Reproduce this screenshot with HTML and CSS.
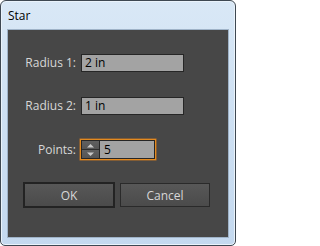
FILE: index.html
```html
<!DOCTYPE html>
<html>
<head>
<meta charset="utf-8">
<link rel="stylesheet" href="styles.css">
</head>
<body>
<div class="window">
  <div class="titlebar">Star</div>
  <div class="client">
    <div class="form">
      <label class="lbl">Radius 1:</label>
      <div class="field">2 in</div>
      <label class="lbl">Radius 2:</label>
      <div class="field">1 in</div>
      <label class="lbl lbl-points">Points:</label>
      <div class="spin-wrap">
        <div class="spin">
          <div class="spin-btns">
            <div class="spin-btn"><svg width="9" height="5" viewBox="0 0 9 5"><path d="M1 4.5 L4.5 1 L8 4.5 Z" fill="#c9c9c9"/></svg></div>
            <div class="spin-btn"><svg width="9" height="5" viewBox="0 0 9 5"><path d="M1 0.5 L4.5 4 L8 0.5 Z" fill="#c9c9c9"/></svg></div>
          </div>
          <div class="spin-val">5</div>
        </div>
      </div>
    </div>
    <div class="buttons">
      <div class="btn btn-default">OK</div>
      <div class="btn btn-cancel">Cancel</div>
    </div>
  </div>
</div>
</body>
</html>
```
FILE: styles.css
```css
html, body {
  margin: 0;
  padding: 0;
  background: #ffffff;
}
body {
  font-family: "Open Sans", "Noto Sans", sans-serif;
  font-size: 12px;
}
.window {
  box-sizing: border-box;
  width: 236px;
  height: 246px;
  border: 1px solid #3e4852;
  border-radius: 6px 6px 5px 5px;
  background: linear-gradient(180deg, #d9e8f6 0%, #cfe1f3 40%, #c4d9ef 100%);
  box-shadow: inset 0 0 0 1px #eaf3fb;
  padding: 0 6px 7px 6px;
  display: flex;
  flex-direction: column;
}
.titlebar {
  height: 28px;
  box-sizing: border-box;
  padding: 7px 0 0 1px;
  line-height: 16px;
  color: #000000;
}
.client {
  border: 1px solid #9fb3c8;
  background: #474747;
  height: 207px;
  display: flex;
  flex-direction: column;
}
.form {
  display: grid;
  grid-template-columns: 68px 103px;
  column-gap: 5px;
  row-gap: 25px;
  padding-top: 24px;
  align-items: center;
}
.lbl {
  color: #d7d7d7;
  text-align: right;
  line-height: 16px;
}
.field {
  box-sizing: border-box;
  height: 18px;
  border: 1px solid #262626;
  background: #a3a3a3;
  color: #000000;
  line-height: 16px;
  padding-left: 3px;
}
.spin-wrap {
  margin-top: -1px;
  margin-left: -1px;
  width: 76px;
  height: 21px;
  box-sizing: border-box;
  border: 1px solid #e48a1f;
  box-shadow: 0 0 0 0.5px #c07525;
}
.spin {
  box-sizing: border-box;
  height: 19px;
  border: 1px solid #262626;
  display: flex;
}
.spin-btns {
  width: 17px;
  display: flex;
  flex-direction: column;
  border-right: 1px solid #262626;
}
.spin-btn {
  flex: 1;
  background: linear-gradient(180deg, #606060, #555555);
  display: flex;
  align-items: center;
  justify-content: center;
}
.spin-btn + .spin-btn {
  border-top: 1px solid #2e2e2e;
}
.spin-btn svg {
  display: block;
}
.spin-val {
  flex: 1;
  background: #a3a3a3;
  color: #000000;
  line-height: 17px;
  padding-left: 4px;
}
.buttons {
  display: flex;
  gap: 5px;
  margin-top: 22px;
  padding-left: 15px;
}
.btn {
  box-sizing: border-box;
  color: #d7d7d7;
  text-align: center;
  display: flex;
  align-items: center;
  justify-content: center;
  background: linear-gradient(180deg, #585858 0%, #515151 50%, #4b4b4b 100%);
}
.btn-default {
  width: 92px;
  height: 26px;
  border: 2px solid #232323;
}
.btn-cancel {
  width: 90px;
  height: 24px;
  margin-top: 1px;
  border: 1px solid #2a2a2a;
}
```
